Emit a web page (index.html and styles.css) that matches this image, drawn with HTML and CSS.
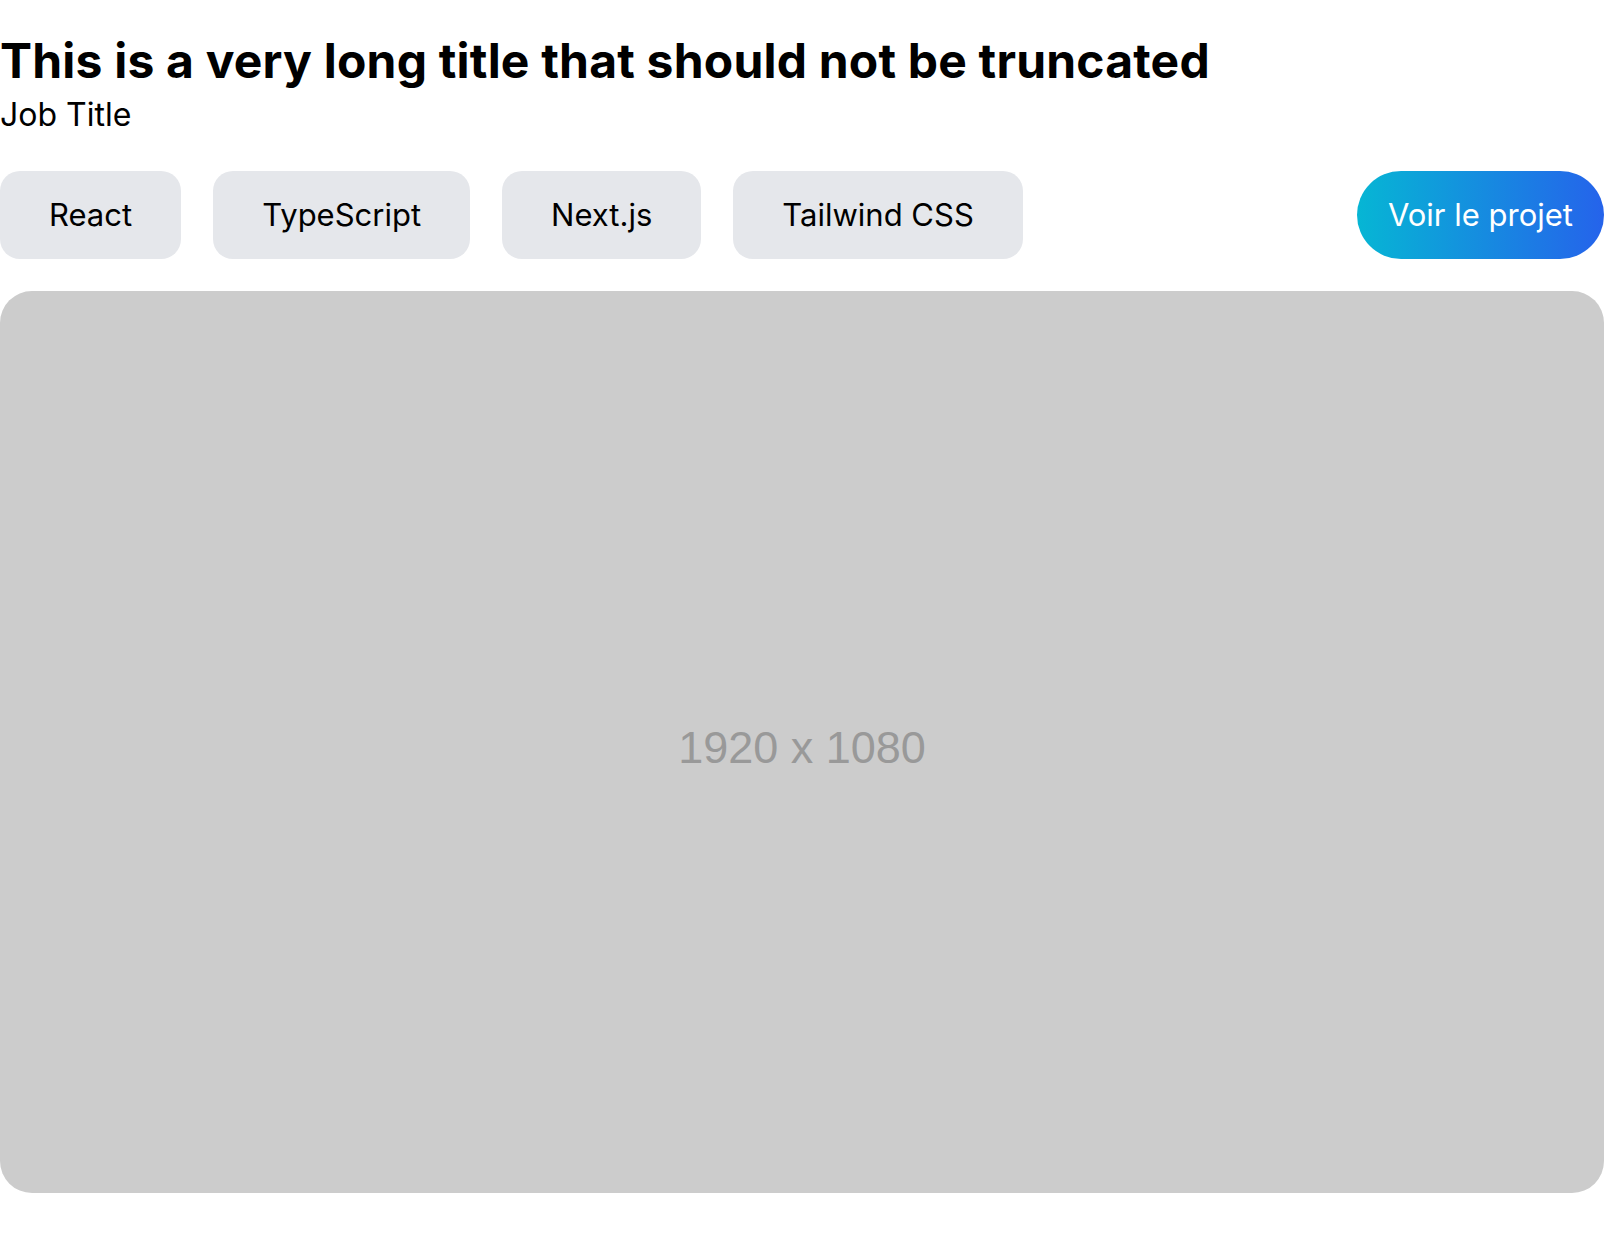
FILE: index.html
```html
<!DOCTYPE html>
<html lang="en">
<head>
<meta charset="utf-8">
<title>Project</title>
<link rel="stylesheet" href="styles.css">
</head>
<body>
<main class="project">
  <header class="head">
    <h1 class="title">This is a very long title that should not be truncated</h1>
    <p class="subtitle">Job Title</p>
  </header>
  <div class="bar">
    <ul class="tags">
      <li class="tag">React</li>
      <li class="tag">TypeScript</li>
      <li class="tag">Next.js</li>
      <li class="tag">Tailwind CSS</li>
    </ul>
    <a class="cta" href="#">Voir le projet</a>
  </div>
  <div class="media"><span class="media-label">1920 x 1080</span></div>
</main>
</body>
</html>
```
FILE: styles.css
```css
html, body {
  margin: 0;
  padding: 0;
  background: #ffffff;
}
body {
  font-family: Inter, "Noto Sans", sans-serif;
  color: #000;
}
.project {
  padding-top: 32px;
  display: flex;
  flex-direction: column;
}
.head {
  display: flex;
  flex-direction: column;
}
.title {
  margin: 0;
  font-size: 48px;
  line-height: 58px;
  font-weight: 700;
  letter-spacing: 0.2px;
}
.subtitle {
  margin: 5px 0 0;
  font-size: 32px;
  line-height: 40px;
  font-weight: 400;
}
.bar {
  margin-top: 36px;
  display: flex;
  justify-content: space-between;
  align-items: center;
}
.tags {
  list-style: none;
  margin: 0;
  padding: 0;
  display: flex;
  gap: 32px;
}
.tag {
  background: #e5e7eb;
  border-radius: 20px;
  padding: 20px 49px;
  font-size: 31px;
  line-height: 48px;
}
.cta {
  display: block;
  background: linear-gradient(to right, #06b6d4, #2563eb);
  color: #fff;
  text-decoration: none;
  border-radius: 9999px;
  padding: 20px 31px;
  font-size: 31px;
  line-height: 48px;
}
.media {
  margin-top: 32px;
  background: #cccccc;
  border-radius: 32px;
  aspect-ratio: 1920 / 1080;
  display: flex;
  align-items: center;
  justify-content: center;
}
.media-label {
  font-family: "Liberation Sans", Arial, sans-serif;
  font-size: 45px;
  color: #999999;
  padding-top: 12px;
}
```
